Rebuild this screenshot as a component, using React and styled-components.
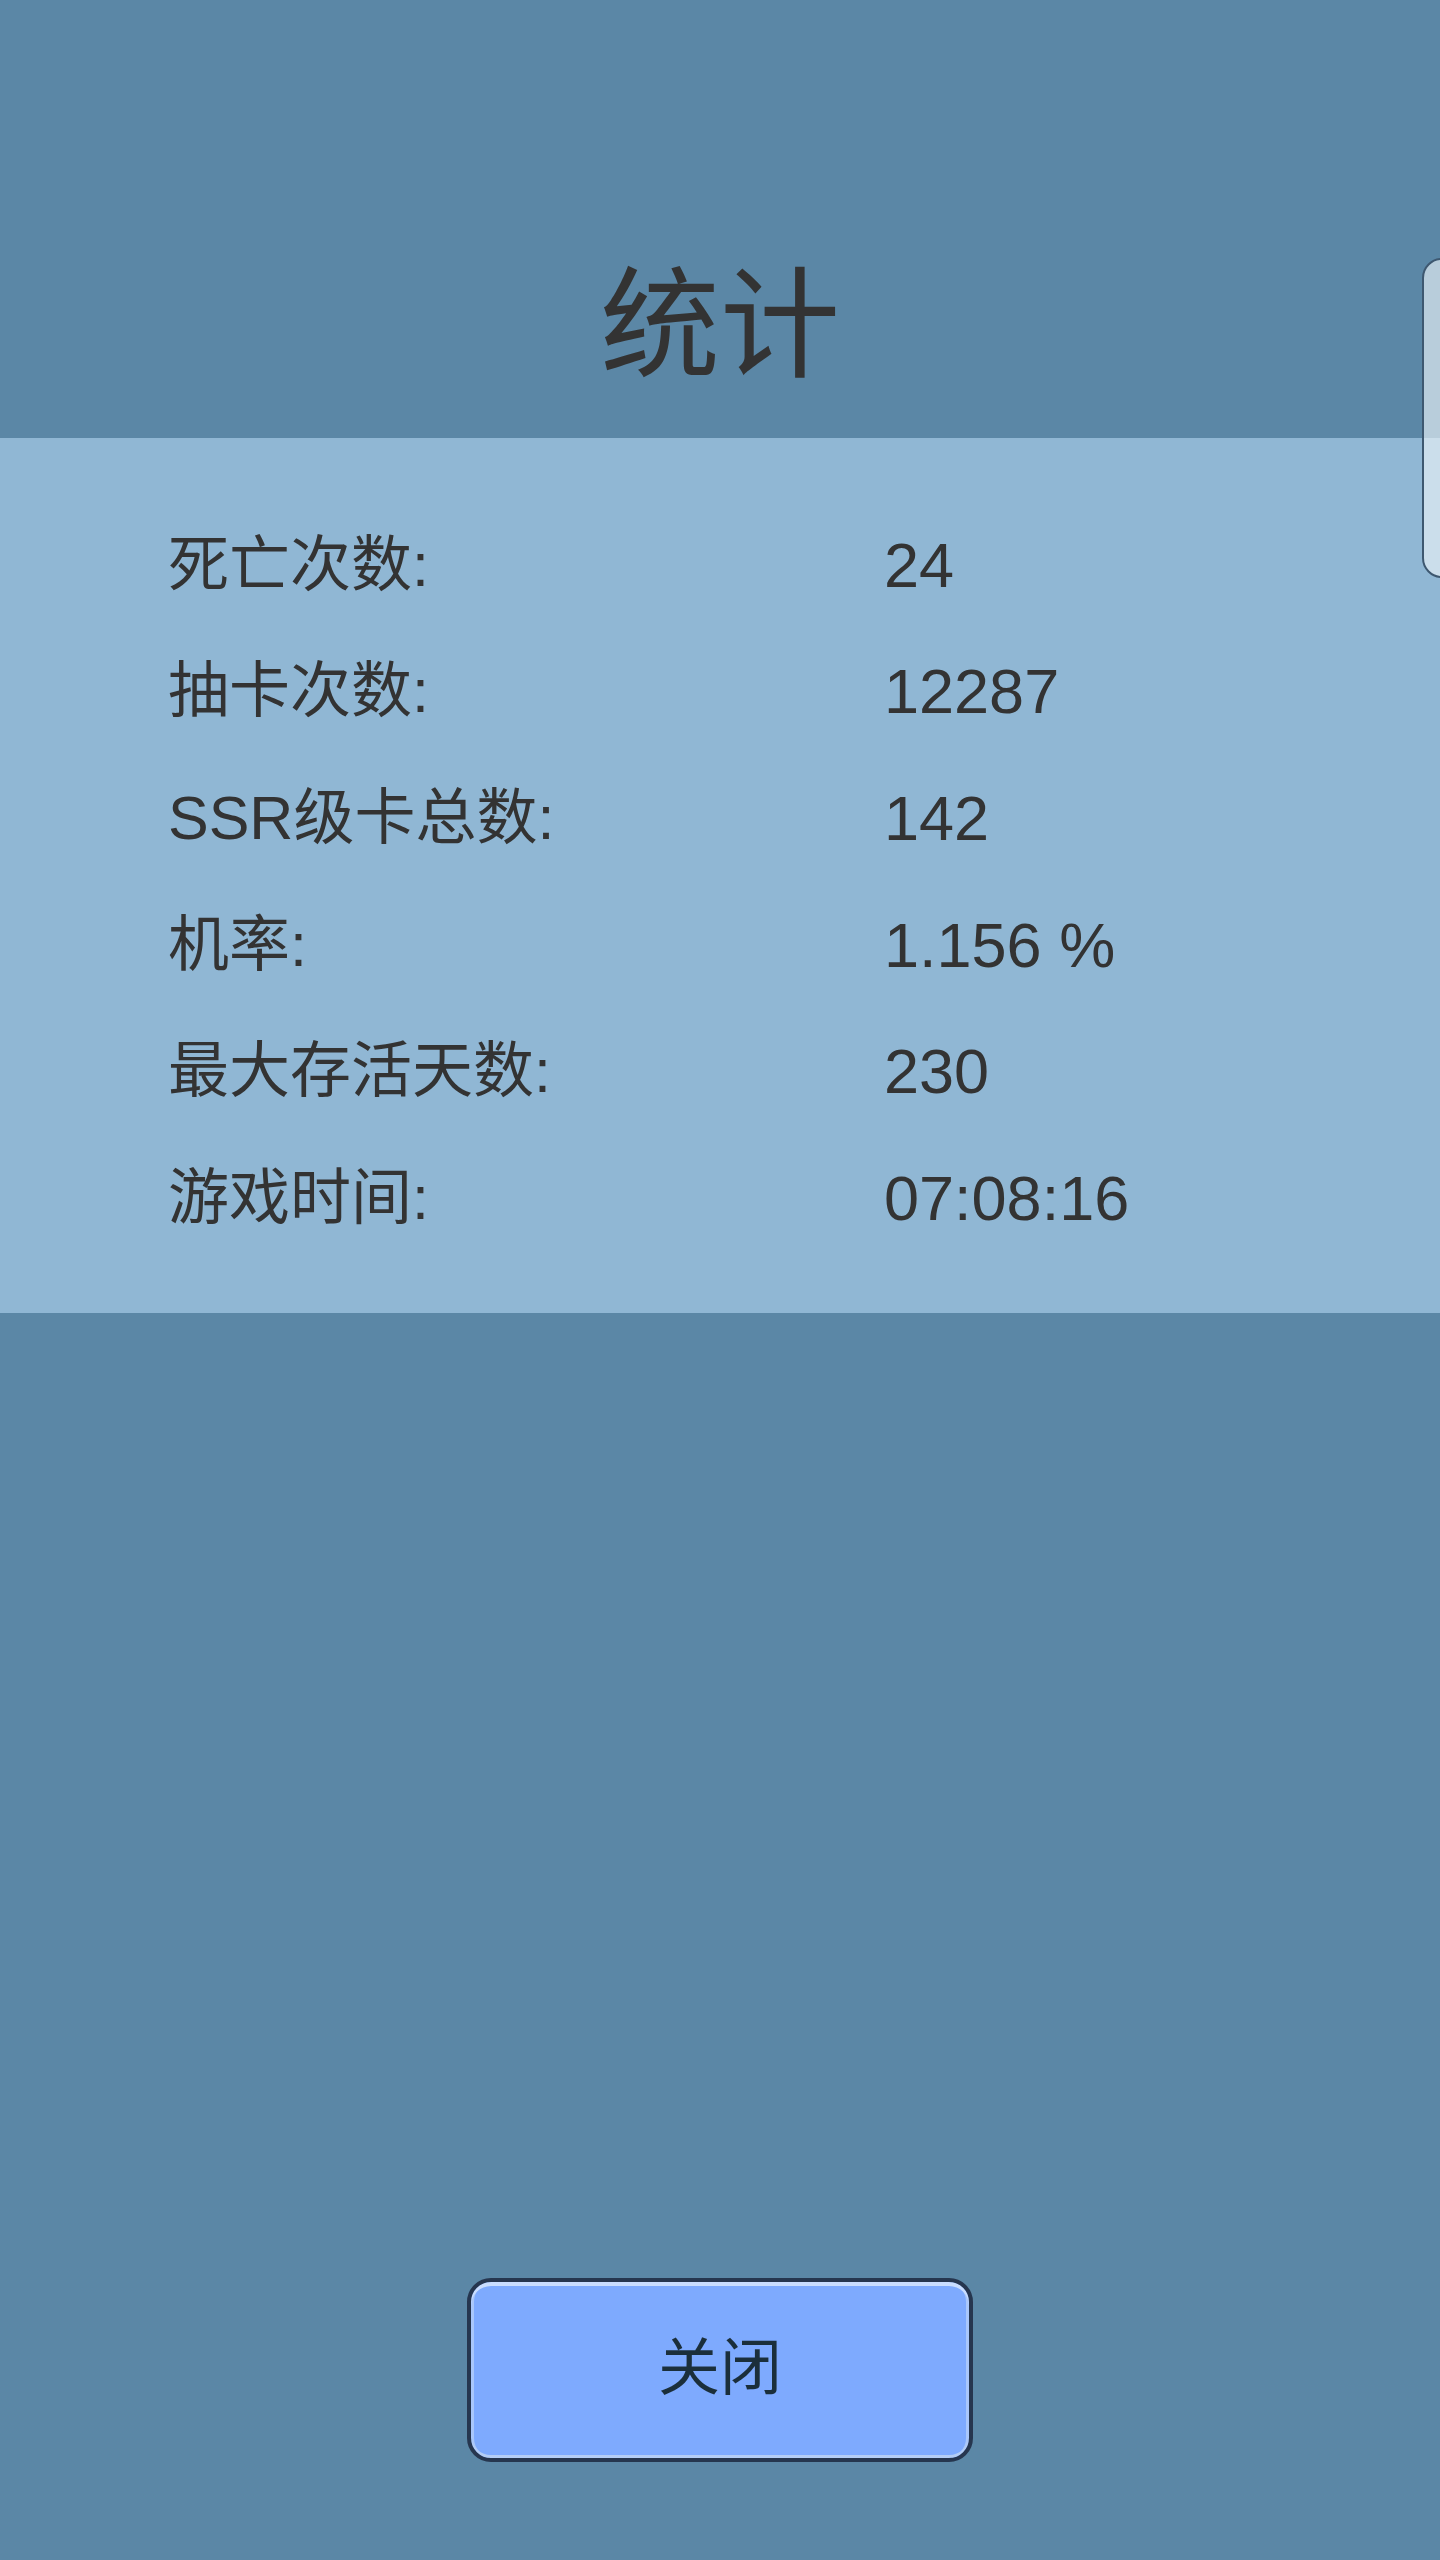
import React from "react";
import styled, { createGlobalStyle } from "styled-components";

const GlobalStyle = createGlobalStyle`
  html, body {
    margin: 0;
    padding: 0;
    background: #5b87a6;
  }
  body {
    font-family: "Liberation Sans", "Noto Sans CJK SC", sans-serif;
  }
`;

const Screen = styled.div`
  position: relative;
  display: flex;
  flex-direction: column;
  width: 1440px;
  min-height: 2560px;
  background: #5b87a6;
  color: #333333;
  overflow: hidden;
`;

const Header = styled.div`
  height: 438px;
  box-sizing: border-box;
  padding-top: 194px;
  display: flex;
  justify-content: center;
  align-items: center;
`;

const Title = styled.h1`
  margin: 0;
  font-family: "Noto Sans CJK SC", sans-serif;
  font-weight: 400;
  font-size: 120px;
  line-height: 1;
  color: #333333;
`;

const Panel = styled.div`
  background: #90b7d4;
  height: 875px;
  box-sizing: border-box;
  padding: 64px 0 0 168px;
  display: grid;
  grid-template-columns: 716px 1fr;
  grid-auto-rows: 126.6px;
  align-content: start;
`;

const Cell = styled.div`
  display: flex;
  align-items: center;
  font-size: ${(p) => (p.$cjk ? "61px" : "63px")};
  line-height: 1;
  color: #333333;
  font-family: ${(p) =>
    p.$cjk
      ? `"Liberation Sans", "Noto Sans CJK SC", sans-serif`
      : `"Liberation Sans", sans-serif`};
`;

const Footer = styled.div`
  margin-top: auto;
  padding-bottom: 98px;
  display: flex;
  justify-content: center;
`;

const CloseButton = styled.button`
  width: 506px;
  height: 184px;
  box-sizing: border-box;
  border: 4px solid #26364f;
  border-radius: 24px;
  background: #7eaafe;
  box-shadow: inset 0 4px 0 #c9ddff, inset 0 -3px 0 #b4cdf5,
    inset 3px 0 0 #a9c7fb, inset -3px 0 0 #a9c7fb;
  font-family: "Noto Sans CJK SC", sans-serif;
  font-size: 62px;
  line-height: 1;
  color: #1b2f3b;
  padding: 0 0 14px 0;
  cursor: pointer;
`;

// the half-hidden scroll tab on the right edge
const SideTab = styled.div`
  position: absolute;
  top: 258px;
  left: 1422px;
  width: 60px;
  height: 320px;
  box-sizing: border-box;
  border: 2px solid #3e5870;
  border-radius: 20px;
  background: rgba(235, 242, 248, 0.65);
`;

const stats = [
  ["死亡次数:", "24"],
  ["抽卡次数:", "12287"],
  ["SSR级卡总数:", "142"],
  ["机率:", "1.156 %"],
  ["最大存活天数:", "230"],
  ["游戏时间:", "07:08:16"],
];

export default function App() {
  return (
    <Screen>
      <GlobalStyle />
      <Header>
        <Title>统计</Title>
      </Header>
      <Panel>
        {stats.map(([label, value]) => (
          <React.Fragment key={label}>
            <Cell $cjk>{label}</Cell>
            <Cell>{value}</Cell>
          </React.Fragment>
        ))}
      </Panel>
      <Footer>
        <CloseButton>关闭</CloseButton>
      </Footer>
      <SideTab />
    </Screen>
  );
}
